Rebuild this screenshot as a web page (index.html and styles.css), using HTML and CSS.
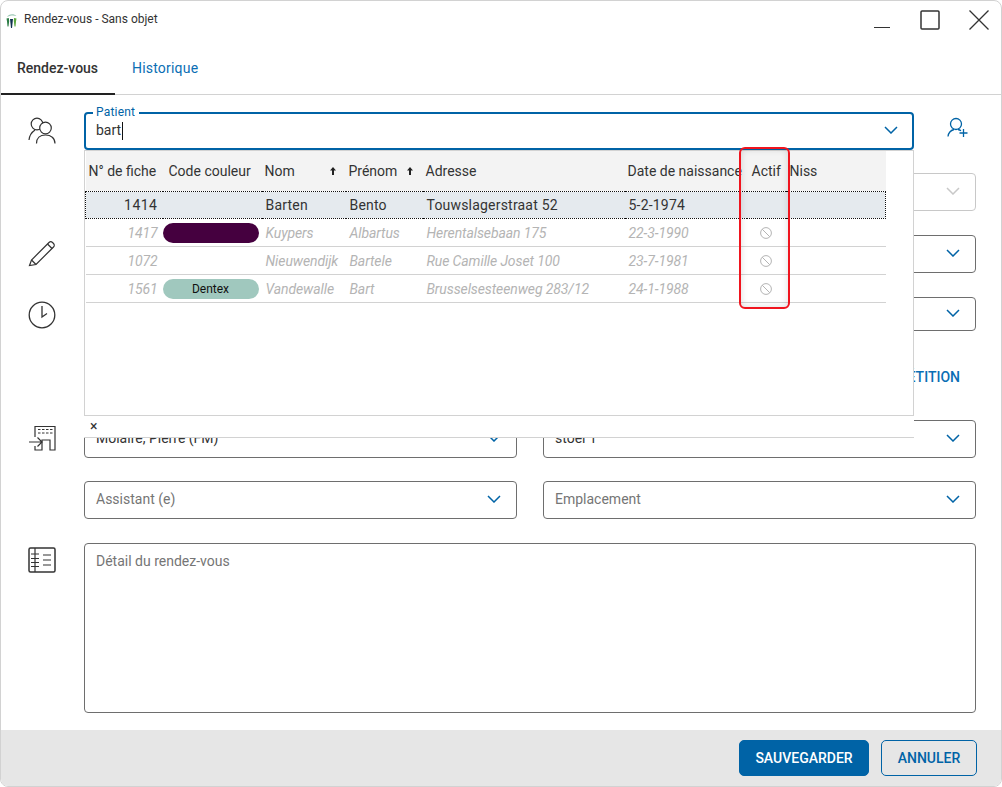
FILE: index.html
```html
<!DOCTYPE html>
<html lang="fr">

<head>
    <meta charset="UTF-8">
    <meta name="viewport" content="width=device-width, initial-scale=1.0">
    <title>Rendez-vous - Sans objet</title>
    <link rel="stylesheet" href="styles.css">
</head>

<body>
    <div class="window">
        <div class="titlebar">
            <svg class="logo" width="11" height="15" viewBox="0 0 11 15">
                <path d="M1 4C2 1 8 0 10.500 3C7.500 2 3.500 2.200 1 4Z" fill="#9cc7b4" />
                <path d="M.5 5.500L2.800 5L3.200 8L2.500 13.500L1.500 13.500L1 8.500Z" fill="#2d7d46" />
                <path d="M8 5L10.500 5.500L10 8.500L9.500 13.500L8.500 13.500L7.800 8Z" fill="#5aa83c" />
                <path d="M4 6H7L6.500 10.500L6 15H5L4.500 10.500Z" fill="#12324f" />
            </svg>
            <span class="title">Rendez-vous - Sans objet</span>
            <div class="controls">
                <svg width="16" height="20" viewBox="0 0 16 20">
                    <path d="M0 17.500H16" stroke="#333" stroke-width="1.200" />
                </svg>
                <svg width="20" height="20" viewBox="0 0 20 20">
                    <rect x="1" y="1" width="18" height="18" rx="1" fill="none" stroke="#333" stroke-width="1.500" />
                </svg>
                <svg width="20" height="20" viewBox="0 0 20 20">
                    <path d="M.5 .5L19.500 19.500M19.500 .5L.5 19.500" stroke="#333" stroke-width="1.300" />
                </svg>
            </div>
        </div>

        <div class="tabs">
            <div class="tab active">Rendez-vous</div>
            <div class="tab tab-link">Historique</div>
        </div>

        <div class="content">
            <div class="row row-patient">
                <div class="row-icon">
                    <svg width="28" height="28" viewBox="0 0 28 28" fill="none" stroke="#333" stroke-width="1.200">
                        <circle cx="9" cy="7" r="5.800" />
                        <circle cx="17.500" cy="11" r="5.800" fill="#fff" />
                        <path d="M1 23C1.500 18 4 15 7 13" />
                        <path d="M8.500 26.500C8.500 21 12 18 17.500 18C23 18 27 21 27 26.500" />
                    </svg>
                </div>
                <div class="field field-focus">
                    <span class="field-label">Patient</span>
                    <span class="value">bart</span><span class="caret"></span>
                    <svg class="chevron" width="14" height="8" viewBox="0 0 14 8">
                        <path d="M1 1L7 7L13 1" />
                    </svg>

                    <div class="dropdown">
                        <table class="grid">
                            <colgroup>
                                <col class="c-num">
                                <col class="c-code">
                                <col class="c-nom">
                                <col class="c-prenom">
                                <col class="c-adresse">
                                <col class="c-date">
                                <col class="c-actif">
                                <col class="c-niss">
                            </colgroup>
                            <thead>
                                <tr>
                                    <th>N° de fiche</th>
                                    <th class="th-code">Code couleur</th>
                                    <th>Nom<svg class="sort sort-nom" width="6" height="8" viewBox="0 0 6 8"><path d="M3 0L6 3.500H4V8H2V3.500H0Z" /></svg></th>
                                    <th>Prénom<svg class="sort sort-prenom" width="6" height="8" viewBox="0 0 6 8"><path d="M3 0L6 3.500H4V8H2V3.500H0Z" /></svg></th>
                                    <th>Adresse</th>
                                    <th>Date de naissance</th>
                                    <th class="th-actif">Actif</th>
                                    <th class="th-niss">Niss</th>
                                </tr>
                            </thead>
                            <tbody>
                                <tr class="selected">
                                    <td class="num">1414</td>
                                    <td></td>
                                    <td>Barten</td>
                                    <td>Bento</td>
                                    <td>Touwslagerstraat 52</td>
                                    <td>5-2-1974</td>
                                    <td></td>
                                    <td></td>
                                </tr>
                                <tr class="inactive">
                                    <td class="num">1417</td>
                                    <td class="pill-cell"><span class="pill pill-purple"></span></td>
                                    <td>Kuypers</td>
                                    <td>Albartus</td>
                                    <td>Herentalsebaan 175</td>
                                    <td>22-3-1990</td>
                                    <td class="ban-cell"><svg class="ban" width="12" height="12" viewBox="0 0 12 12"><circle cx="6" cy="6" r="5.400" /><path d="M2.200 2.200L9.800 9.800" /></svg></td>
                                    <td></td>
                                </tr>
                                <tr class="inactive">
                                    <td class="num">1072</td>
                                    <td></td>
                                    <td>Nieuwendijk</td>
                                    <td>Bartele</td>
                                    <td>Rue Camille Joset 100</td>
                                    <td>23-7-1981</td>
                                    <td class="ban-cell"><svg class="ban" width="12" height="12" viewBox="0 0 12 12"><circle cx="6" cy="6" r="5.400" /><path d="M2.200 2.200L9.800 9.800" /></svg></td>
                                    <td></td>
                                </tr>
                                <tr class="inactive">
                                    <td class="num">1561</td>
                                    <td class="pill-cell"><span class="pill pill-green">Dentex</span></td>
                                    <td>Vandewalle</td>
                                    <td>Bart</td>
                                    <td>Brusselsesteenweg 283/12</td>
                                    <td>24-1-1988</td>
                                    <td class="ban-cell"><svg class="ban" width="12" height="12" viewBox="0 0 12 12"><circle cx="6" cy="6" r="5.400" /><path d="M2.200 2.200L9.800 9.800" /></svg></td>
                                    <td></td>
                                </tr>
                            </tbody>
                        </table>
                        <div class="dropdown-bar">×</div>
                        <div class="highlight"></div>
                    </div>
                </div>
                <div class="add-patient">
                    <svg width="24" height="24" viewBox="0 0 24 24" fill="none" stroke="#0063a6" stroke-width="1.300">
                        <circle cx="10" cy="8" r="5.500" />
                        <path d="M2 20.500C2.500 16.500 5 14.300 8 13.500" />
                        <path d="M12 13.500C13 13.700 14 14 15 14.700" />
                        <path d="M17.500 13V21M13.500 17H21.500" />
                    </svg>
                </div>
            </div>

            <div class="row row-second">
                <div class="row-icon"></div>
                <div class="field field-disabled">
                    <svg class="chevron" width="14" height="8" viewBox="0 0 14 8">
                        <path d="M1 1L7 7L13 1" />
                    </svg>
                </div>
            </div>

            <div class="row">
                <div class="row-icon">
                    <svg width="28" height="28" viewBox="0 0 28 28" fill="none" stroke="#333" stroke-width="1.200">
                        <path d="M1.500 25.500L3.500 20L21 2.500C22 1.500 23.500 1.500 24.500 2.500L25.500 3.500C26.500 4.500 26.500 6 25.500 7L8 24.500Z" />
                        <path d="M3.500 20L8 24.500" />
                        <path d="M19.500 4L24 8.500" />
                    </svg>
                </div>
                <div class="field">
                    <svg class="chevron" width="14" height="8" viewBox="0 0 14 8">
                        <path d="M1 1L7 7L13 1" />
                    </svg>
                </div>
            </div>

            <div class="row">
                <div class="row-icon row-icon-clock">
                    <svg width="28" height="28" viewBox="0 0 28 28" fill="none" stroke="#333" stroke-width="1.300">
                        <circle cx="14" cy="14" r="12.800" />
                        <path d="M14 5V16L19 12.500" />
                    </svg>
                </div>
                <div class="field field-short">
                    <svg class="chevron" width="14" height="8" viewBox="0 0 14 8">
                        <path d="M1 1L7 7L13 1" />
                    </svg>
                </div>
            </div>

            <div class="link-row">RÉPÉTITION</div>

            <div class="row row-compact">
                <div class="row-icon">
                    <svg width="28" height="28" viewBox="0 0 28 28" fill="none" stroke="#333" stroke-width="1.200">
                        <path d="M7 12V1.500H27V25H22V15H14V25H7V21" />
                        <path d="M10 4.500H12.500M14 4.500H16.500M18 4.500H20.500M22 4.500H24.500M10 8H12.500M14 8H16.500M18 8H20.500M22 8H24.500" stroke-width="1" />
                        <path d="M1 17H14M9.500 12.500L14 17L9.500 21.500" />
                    </svg>
                </div>
                <div class="field-pair">
                    <div class="field">
                        <span class="value">Molaire, Pierre (FM)</span>
                        <svg class="chevron" width="14" height="8" viewBox="0 0 14 8">
                            <path d="M1 1L7 7L13 1" />
                        </svg>
                    </div>
                    <div class="field">
                        <span class="value">stoel 1</span>
                        <svg class="chevron" width="14" height="8" viewBox="0 0 14 8">
                            <path d="M1 1L7 7L13 1" />
                        </svg>
                    </div>
                </div>
            </div>

            <div class="row row-compact">
                <div class="row-icon"></div>
                <div class="field-pair">
                    <div class="field">
                        <span class="placeholder">Assistant (e)</span>
                        <svg class="chevron" width="14" height="8" viewBox="0 0 14 8">
                            <path d="M1 1L7 7L13 1" />
                        </svg>
                    </div>
                    <div class="field">
                        <span class="placeholder">Emplacement</span>
                        <svg class="chevron" width="14" height="8" viewBox="0 0 14 8">
                            <path d="M1 1L7 7L13 1" />
                        </svg>
                    </div>
                </div>
            </div>

            <div class="row row-detail">
                <div class="row-icon">
                    <svg width="28" height="26" viewBox="0 0 28 26" fill="none" stroke="#333" stroke-width="1.200">
                        <rect x="1" y="1" width="26" height="24" rx="1.500" stroke-width="1.500" />
                        <path d="M7 1V25" />
                        <path d="M3 7H11M3 11.500H11M3 15.500H11M3 19.500H11" />
                        <path d="M15 8H23M15 13H23M15 18H23" />
                    </svg>
                </div>
                <div class="field field-area">
                    <span class="placeholder">Détail du rendez-vous</span>
                </div>
            </div>
        </div>

        <div class="footer">
            <button class="btn btn-primary">SAUVEGARDER</button>
            <button class="btn btn-outline">ANNULER</button>
        </div>
    </div>
</body>

</html>
```

FILE: styles.css
```css
* {
    margin: 0;
    padding: 0;
    box-sizing: border-box;
}

body {
    font-family: Roboto, "Liberation Sans", sans-serif;
    font-size: 14px;
    color: #333;
    background-color: #fff;
}

.window {
    width: 1002px;
    height: 787px;
    border: 1px solid #d2d2d2;
    border-radius: 8px;
    display: flex;
    flex-direction: column;
    overflow: hidden;
    background-color: #fff;
}

/* title bar */
.titlebar {
    height: 46px;
    display: flex;
    align-items: flex-start;
    flex-shrink: 0;
}

.logo {
    margin: 12px 0 0 5px;
}

.title {
    margin: 11px 0 0 7px;
    font-size: 12px;
    line-height: 15px;
    color: #333;
}

.controls {
    margin: 9px 12px 0 auto;
    display: flex;
    gap: 29px;
}

.controls svg:first-child {
    margin-right: 1px;
}

/* tabs */
.tabs {
    height: 48px;
    border-bottom: 1px solid #d2d2d2;
    display: flex;
    flex-shrink: 0;
}

.tab {
    width: 131px;
    padding-top: 13px;
    padding-left: 16px;
    font-size: 14px;
    line-height: 17px;
    color: #0a6eb4;
}

.tab-link {
    letter-spacing: 0.2px;
}

.tab.active {
    width: 114px;
    margin-right: 1px;
    height: 48px;
    font-weight: 500;
    color: #333;
    border-bottom: 2px solid #222;
}

/* form */
.content {
    flex: 1;
    padding: 17px 25px 0 0;
    display: flex;
    flex-direction: column;
}

.row {
    display: flex;
    margin-bottom: 24px;
}

.row-patient {
    margin-bottom: 23px;
    margin-right: -25px;
    position: relative;
    z-index: 2;
}

.row-compact {
    margin-bottom: 23px;
}

.row-compact+.row-compact {
    margin-bottom: 24px;
}

.row-icon {
    width: 83px;
    padding-left: 27px;
    padding-top: 5px;
    flex-shrink: 0;
}

.row-icon-clock {
    padding-top: 4px;
}

.field {
    flex: 1;
    min-width: 0;
    height: 38px;
    padding: 0 11px;
    border: 1px solid #6e6e6e;
    border-radius: 4px;
    display: flex;
    align-items: center;
    position: relative;
    background-color: #fff;
}

.field-short {
    height: 34px;
}

.field-focus {
    flex: none;
    width: 830px;
    border: 2px solid #0063a6;
    padding: 0 10px;
}

.field-disabled {
    border-color: #c8c8c8;
}

.field-disabled .chevron path {
    stroke: #c8c8c8;
}

.field-label {
    position: absolute;
    left: 7px;
    top: -8px;
    padding: 0 4px 0 3px;
    font-size: 12px;
    line-height: 13px;
    letter-spacing: 0.2px;
    color: #0063a6;
    background-color: #fff;
}

.value {
    margin-bottom: 2px;
    color: #333;
}

.caret {
    width: 1px;
    height: 18px;
    margin-left: 1px;
    background-color: #111;
}

.placeholder {
    margin-bottom: 2px;
    color: #757575;
}

.chevron {
    margin: 0 4px 2px auto;
    flex-shrink: 0;
}

.chevron path {
    fill: none;
    stroke: #0063a6;
    stroke-width: 1.500;
}

.add-patient {
    padding: 4px 0 0 32px;
}

.link-row {
    height: 88px;
    margin-top: -24px;
    padding: 37px 16px 0 0;
    text-align: right;
    font-size: 14px;
    font-weight: 500;
    line-height: 17px;
    color: #0a6eb4;
}

.field-pair {
    flex: 1;
    display: grid;
    grid-template-columns: 433px 433px;
    column-gap: 26px;
}

.field-area {
    height: 170px;
    align-items: flex-start;
    padding-top: 9px;
}

.row-detail {
    margin-bottom: 0;
}

.row-detail .row-icon {
    padding-top: 4px;
}

/* dropdown over the form */
.dropdown {
    position: absolute;
    left: -2px;
    top: 36px;
    width: 830px;
    height: 288px;
    border: 1px solid #d2d2d2;
    background-color: #fff;
    display: flex;
    flex-direction: column;
    z-index: 5;
}

.grid {
    width: 800px;
    table-layout: fixed;
    border-collapse: collapse;
    flex-shrink: 0;
}

.c-num {
    width: 77px;
}

.c-code {
    width: 99px;
}

.c-nom {
    width: 84px;
}

.c-prenom {
    width: 77px;
}

.c-adresse {
    width: 202px;
}

.c-date {
    width: 122px;
}

.c-actif {
    width: 39px;
}

.c-niss {
    width: 100px;
}

.grid th {
    height: 40px;
    padding: 0 0 0 3px;
    text-align: left;
    font-weight: 400;
    white-space: nowrap;
    background-color: #f3f3f3;
    position: relative;
}

.grid th.th-code {
    padding-left: 6px;
}

.grid th.th-actif {
    padding-left: 5px;
}

.grid th.th-niss {
    padding-left: 4px;
}

.sort {
    position: absolute;
    top: 16px;
    fill: #222;
}

.sort-nom {
    left: 68px;
}

.sort-prenom {
    left: 61px;
}

.grid td {
    height: 28px;
    padding: 2px 0 0 4px;
    white-space: nowrap;
    overflow: hidden;
    border-bottom: 1px solid #d2d2d2;
}

.grid td.num {
    padding: 2px 5px 0 0;
    text-align: right;
}

.grid td.pill-cell {
    padding: 2px 0 0 0;
}

.grid td.ban-cell {
    padding: 1px 0 0 13px;
}

.selected td {
    height: 27px;
    padding-top: 1px;
    letter-spacing: 0.2px;
    background-color: #e5eaee;
    border-top: 1px dotted #111;
    border-bottom: 1px dotted #111;
}

.selected td.num {
    padding-top: 1px;
    letter-spacing: 0.5px;
}

.selected td:first-child {
    border-left: 1px dotted #111;
}

.selected td:last-child {
    border-right: 1px dotted #111;
}

.inactive td {
    font-style: italic;
    letter-spacing: -0.1px;
    color: #b4b4b4;
}

.pill {
    display: block;
    width: 96px;
    height: 20px;
    border-radius: 10px;
    font-size: 12px;
    font-style: normal;
    line-height: 20px;
    letter-spacing: 0;
    text-align: center;
    color: #111;
}

.pill-purple {
    background-color: #45003f;
}

.pill-green {
    background-color: #a0c8be;
}

.ban {
    display: block;
    fill: none;
    stroke: #b4b4b4;
    stroke-width: 1;
}

.dropdown-bar {
    margin: auto -1px -1px;
    height: 23px;
    padding-left: 6px;
    border-top: 1px solid #d2d2d2;
    border-bottom: 1px solid #d2d2d2;
    font-size: 14px;
    line-height: 20px;
    background-color: #fff;
}

.highlight {
    position: absolute;
    left: 654px;
    top: -4px;
    width: 51px;
    height: 162px;
    border: 2px solid #f0141e;
    border-radius: 6px;
    box-shadow: inset 0 0 7px rgba(0, 0, 0, 0.14);
}

/* footer */
.footer {
    height: 56px;
    padding: 10px 24px 0 0;
    display: flex;
    justify-content: flex-end;
    gap: 12px;
    background-color: #e6e6e6;
    flex-shrink: 0;
}

.btn {
    height: 36px;
    border-radius: 5px;
    border: 1px solid #0063a6;
    font-family: Roboto, "Liberation Sans", sans-serif;
    font-size: 14px;
    font-weight: 500;
}

.btn-primary {
    width: 130px;
    color: #fff;
    background-color: #0063a6;
}

.btn-outline {
    width: 96px;
    color: #0063a6;
    background-color: transparent;
}
```
